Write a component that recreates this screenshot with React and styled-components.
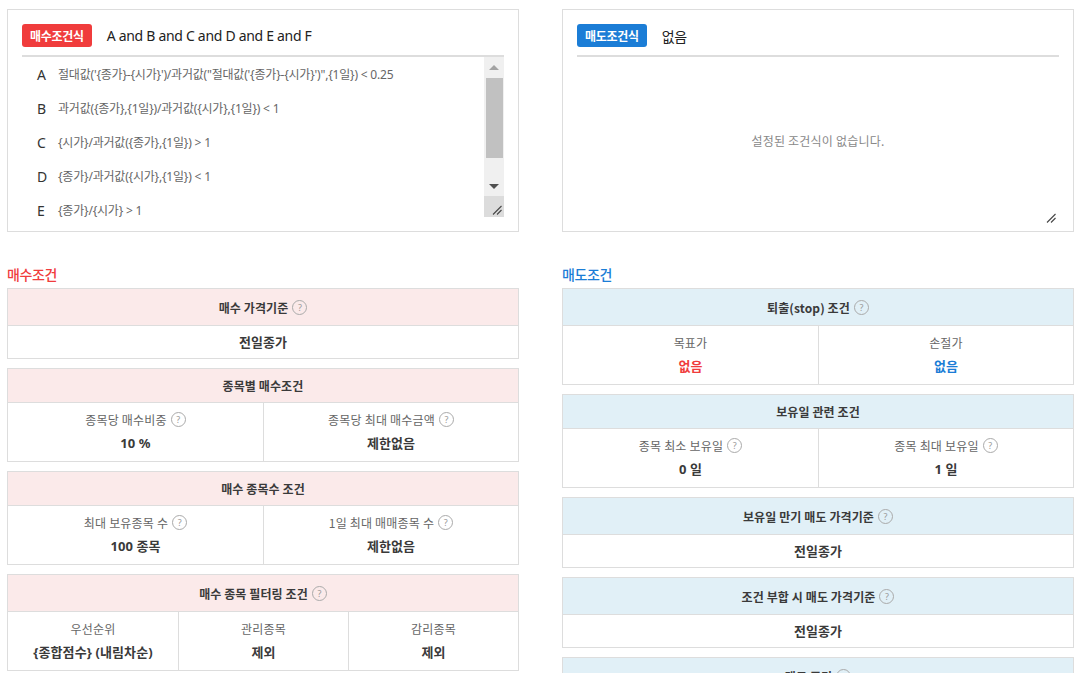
import React from "react";
import styled, { createGlobalStyle } from "styled-components";

const RED = "#f03c3c";
const BLUE = "#1b7dd6";

const GlobalStyle = createGlobalStyle`
  html, body { margin: 0; padding: 0; background: #fff; }
  body {
    font-family: "Noto Sans", "Noto Sans CJK KR", sans-serif;
    color: #333;
    -webkit-font-smoothing: antialiased;
  }
`;

const Page = styled.div`
  display: grid;
  grid-template-columns: 512px 512px;
  column-gap: 43px;
  padding: 9px 0 0 7px;
  width: 1082px;
  height: 673px;
  box-sizing: border-box;
  overflow: hidden;
`;

const Column = styled.div`
  display: flex;
  flex-direction: column;
`;

const ExprBox = styled.div`
  border: 1px solid #ddd;
  padding: 14px;
  display: flex;
  flex-direction: column;
`;

const ExprHeader = styled.div`
  display: flex;
  align-items: center;
  gap: 15px;
  padding-bottom: 8px;
  border-bottom: 2px solid #ddd;
`;

const Badge = styled.span`
  display: inline-flex;
  align-items: center;
  justify-content: center;
  height: 23px;
  padding: 0 8px;
  border-radius: 3px;
  background: ${(p) => p.$color};
  color: #fff;
  font-family: "Noto Sans CJK KR", sans-serif;
  font-size: 12px;
  font-weight: 700;
  letter-spacing: -0.3px;
`;

const ExprTitle = styled.span`
  font-size: 14px;
  color: #222;
  letter-spacing: -0.3px;
`;

const ListArea = styled.div`
  position: relative;
  height: 160px;
  display: flex;
`;

const ListContent = styled.div`
  flex: 1;
  overflow: hidden;
`;

const ExprRow = styled.div`
  height: 34px;
  display: flex;
  align-items: center;
  padding-left: 15px;
`;

const Letter = styled.span`
  width: 21px;
  font-size: 14px;
  color: #333;
`;

const ExprText = styled.span`
  font-size: 12px;
  color: #666;
  letter-spacing: -0.2px;
  white-space: nowrap;
`;

const Scrollbar = styled.div`
  width: 20px;
  background: #f0f0f0;
  display: flex;
  flex-direction: column;
`;

const ArrowBtn = styled.div`
  height: 20px;
  display: flex;
  align-items: center;
  justify-content: center;
  &::after {
    content: "";
    width: 0;
    height: 0;
    border-left: 5px solid transparent;
    border-right: 5px solid transparent;
    ${(p) =>
      p.$dir === "up"
        ? `border-bottom: 5px solid #a3a3a3;`
        : `border-top: 5px solid #505050;`}
  }
`;

const Track = styled.div`
  flex: 1;
  padding: 1px 1px 0 2px;
`;

const Thumb = styled.div`
  height: 80px;
  background: #c1c1c1;
`;

const GripCell = styled.div`
  height: 21px;
  background: #dcdcdc;
  display: flex;
  align-items: flex-end;
  justify-content: flex-end;
  padding: 0 2px 2px 0;
  box-sizing: border-box;
`;

const EmptyMessage = styled.div`
  flex: 1;
  display: flex;
  align-items: center;
  justify-content: center;
  padding-top: 6px;
  font-family: "Noto Sans CJK KR", sans-serif;
  font-size: 12px;
  color: #888;
  letter-spacing: 0.2px;
`;

const CornerGrip = styled.div`
  position: absolute;
  right: 2px;
  bottom: 0px;
  width: 11px;
  height: 11px;
`;

const SectionTitle = styled.h3`
  margin: 32px 0 4px;
  font-family: "Noto Sans CJK KR", sans-serif;
  font-size: 14px;
  line-height: 20px;
  font-weight: 500;
  letter-spacing: -0.4px;
  color: ${(p) => p.$color};
`;

const TableStack = styled.div`
  display: flex;
  flex-direction: column;
  gap: 9px;
`;

const Table = styled.div`
  border: 1px solid #ddd;
`;

const TableHead = styled.div`
  display: flex;
  align-items: center;
  justify-content: center;
  padding: 8px 0;
  background: ${(p) => p.$bg};
  border-bottom: 1px solid #ddd;
  font-family: "Noto Sans CJK KR", sans-serif;
  font-size: 12px;
  line-height: 17px;
  font-weight: 700;
  color: #3a3a3a;
  letter-spacing: 0.1px;
`;

const ValueRow = styled.div`
  padding: 7px 0;
  text-align: center;
  font-family: "Noto Sans CJK KR", sans-serif;
  font-size: 13px;
  line-height: 18px;
  font-weight: 700;
  color: #3a3a3a;
  letter-spacing: 0.1px;
`;

const CellGrid = styled.div`
  display: grid;
  grid-template-columns: repeat(${(p) => p.$cols}, 1fr);
`;

const Cell = styled.div`
  padding: 8px 0;
  text-align: center;
  & + & {
    border-left: 1px solid #ddd;
  }
`;

const CellLabel = styled.div`
  height: 17px;
  display: flex;
  align-items: center;
  justify-content: center;
  font-family: "Noto Sans CJK KR", sans-serif;
  font-size: 12px;
  line-height: 17px;
  color: #666;
  letter-spacing: 0.2px;
`;

const CellValue = styled.div`
  margin-top: 6px;
  font-family: "Noto Sans", "Noto Sans CJK KR", sans-serif;
  font-size: 13px;
  line-height: 19px;
  font-weight: 700;
  color: ${(p) => p.$color || "#3a3a3a"};
  letter-spacing: 0.1px;
`;

const HelpWrap = styled.span`
  display: inline-flex;
  align-items: center;
  height: 20px;
  margin-left: 4px;
`;

const HelpCircle = styled.span`
  width: 13px;
  height: 13px;
  border: 1px solid #aaa;
  border-radius: 50%;
  display: inline-flex;
  align-items: center;
  justify-content: center;
  font-family: "Noto Sans", sans-serif;
  font-size: 9px;
  font-weight: 400;
  line-height: 1;
  color: #999;
  letter-spacing: 0;
`;

const Help = () => (
  <HelpWrap>
    <HelpCircle>?</HelpCircle>
  </HelpWrap>
);

const Hatch = () => (
  <svg width="10" height="10" viewBox="0 0 10 10">
    <line x1="1" y1="9.5" x2="9.5" y2="1" stroke="#444" strokeWidth="1.1" />
    <line x1="5" y1="9.5" x2="9.5" y2="5" stroke="#444" strokeWidth="1.1" />
  </svg>
);

const exprs = [
  ["A", "절대값('{종가}-{시가}')/과거값(\"절대값('{종가}-{시가}')\",{1일}) < 0.25"],
  ["B", "과거값({종가},{1일})/과거값({시가},{1일}) < 1"],
  ["C", "{시가}/과거값({종가},{1일}) > 1"],
  ["D", "{종가}/과거값({시가},{1일}) < 1"],
  ["E", "{종가}/{시가} > 1"],
  ["F", "{거래량}/과거값({거래량},{1일}) > 1"],
];

const PINK = "#fbeaea";
const SKY = "#e1f0f7";

function SimpleTable({ bg, title, help, value }) {
  return (
    <Table>
      <TableHead $bg={bg}>
        {title}
        {help && <Help />}
      </TableHead>
      <ValueRow>{value}</ValueRow>
    </Table>
  );
}

function GridTable({ bg, title, help, cells }) {
  return (
    <Table>
      <TableHead $bg={bg}>
        {title}
        {help && <Help />}
      </TableHead>
      <CellGrid $cols={cells.length}>
        {cells.map((c) => (
          <Cell key={c.label}>
            <CellLabel>
              {c.label}
              {c.help && <Help />}
            </CellLabel>
            <CellValue $color={c.color}>{c.value}</CellValue>
          </Cell>
        ))}
      </CellGrid>
    </Table>
  );
}

export default function App() {
  return (
    <>
      <GlobalStyle />
      <Page>
        <Column>
          <ExprBox>
            <ExprHeader>
              <Badge $color={RED}>매수조건식</Badge>
              <ExprTitle>A and B and C and D and E and F</ExprTitle>
            </ExprHeader>
            <ListArea>
              <ListContent>
                {exprs.map(([k, t]) => (
                  <ExprRow key={k}>
                    <Letter>{k}</Letter>
                    <ExprText>{t}</ExprText>
                  </ExprRow>
                ))}
              </ListContent>
              <Scrollbar>
                <ArrowBtn $dir="up" />
                <Track>
                  <Thumb />
                </Track>
                <ArrowBtn $dir="down" />
                <GripCell>
                  <Hatch />
                </GripCell>
              </Scrollbar>
            </ListArea>
          </ExprBox>

          <SectionTitle $color={RED}>매수조건</SectionTitle>
          <TableStack>
            <SimpleTable bg={PINK} title="매수 가격기준" help value="전일종가" />
            <GridTable
              bg={PINK}
              title="종목별 매수조건"
              cells={[
                { label: "종목당 매수비중", help: true, value: "10 %" },
                { label: "종목당 최대 매수금액", help: true, value: "제한없음" },
              ]}
            />
            <GridTable
              bg={PINK}
              title="매수 종목수 조건"
              cells={[
                { label: "최대 보유종목 수", help: true, value: "100 종목" },
                { label: "1일 최대 매매종목 수", help: true, value: "제한없음" },
              ]}
            />
            <GridTable
              bg={PINK}
              title="매수 종목 필터링 조건"
              help
              cells={[
                { label: "우선순위", value: "{종합점수} (내림차순)" },
                { label: "관리종목", value: "제외" },
                { label: "감리종목", value: "제외" },
              ]}
            />
          </TableStack>
        </Column>

        <Column>
          <ExprBox>
            <ExprHeader>
              <Badge $color={BLUE}>매도조건식</Badge>
              <ExprTitle>없음</ExprTitle>
            </ExprHeader>
            <ListArea>
              <EmptyMessage>설정된 조건식이 없습니다.</EmptyMessage>
              <CornerGrip>
                <Hatch />
              </CornerGrip>
            </ListArea>
          </ExprBox>

          <SectionTitle $color={BLUE}>매도조건</SectionTitle>
          <TableStack>
            <GridTable
              bg={SKY}
              title="퇴출(stop) 조건"
              help
              cells={[
                { label: "목표가", value: "없음", color: RED },
                { label: "손절가", value: "없음", color: BLUE },
              ]}
            />
            <GridTable
              bg={SKY}
              title="보유일 관련 조건"
              cells={[
                { label: "종목 최소 보유일", help: true, value: "0 일" },
                { label: "종목 최대 보유일", help: true, value: "1 일" },
              ]}
            />
            <SimpleTable bg={SKY} title="보유일 만기 매도 가격기준" help value="전일종가" />
            <SimpleTable bg={SKY} title="조건 부합 시 매도 가격기준" help value="전일종가" />
            <SimpleTable bg={SKY} title="매도 주기" help value="매일" />
          </TableStack>
        </Column>
      </Page>
    </>
  );
}
